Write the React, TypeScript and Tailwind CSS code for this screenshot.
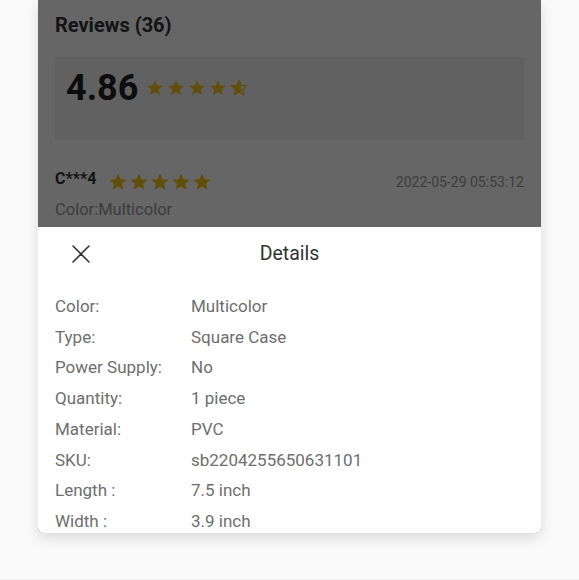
import React from 'react';

const GOLD = '#f2c414';

const Star: React.FC<{ size: number; fill?: number }> = ({ size, fill = 1 }) => {
  const id = React.useId();
  const pts = '12,1.8 15,8.6 22.3,9.2 16.8,14 18.4,21.2 12,17.4 5.6,21.2 7.2,14 1.7,9.2 9,8.6';
  return (
    <svg width={size} height={size} viewBox="0 0 24 24" className="shrink-0">
      <defs>
        <clipPath id={id}>
          <rect x="0" y="0" width={24 * fill} height="24" />
        </clipPath>
      </defs>
      {fill < 1 && <polygon points={pts} fill="none" stroke={GOLD} strokeWidth="1.6" strokeLinejoin="round" />}
      <polygon points={pts} fill={GOLD} clipPath={`url(#${id})`} />
    </svg>
  );
};

const details: [string, string][] = [
  ['Color:', 'Multicolor'],
  ['Type:', 'Square Case'],
  ['Power Supply:', 'No'],
  ['Quantity:', '1 piece'],
  ['Material:', 'PVC'],
  ['SKU:', 'sb2204255650631101'],
  ['Length :', '7.5 inch'],
  ['Width :', '3.9 inch']
];

export default function App() {
  return (
    <div
      className="h-[580px] bg-[#fafafa] border-b border-[#efefef] overflow-hidden"
      style={{ fontFamily: 'Roboto, "Liberation Sans", sans-serif' }}
    >
      <div className="relative ml-[38px] w-[503px] h-[533px] bg-white rounded-b-[6px] overflow-hidden shadow-[0_5px_14px_rgba(0,0,0,0.13)]">
        {/* reviews under the overlay */}
        <div className="px-[17px]">
          <h2 className="text-[20px] font-bold text-[#333] leading-[24px] pt-[13px]">Reviews (36)</h2>
          <div className="mt-[20px] h-[83px] bg-[#f2f2f2] pl-[11px] pt-[11px]">
            <div className="flex items-center gap-[8px]">
              <span className="text-[36px] font-bold text-[#222] leading-[40px]">4.86</span>
              <div className="flex items-center gap-[3px]">
                <Star size={18} />
                <Star size={18} />
                <Star size={18} />
                <Star size={18} />
                <Star size={18} fill={0.6} />
              </div>
            </div>
          </div>
          <div className="mt-[32px] flex items-center justify-between">
            <div className="flex items-center gap-[12px]">
              <span className="text-[16px] font-bold text-[#333] leading-[20px] -mt-[6px]">C***4</span>
              <div className="flex items-center gap-[1px]">
                <Star size={20} />
                <Star size={20} />
                <Star size={20} />
                <Star size={20} />
                <Star size={20} />
              </div>
            </div>
            <span className="text-[14px] text-[#999] leading-[20px]">2022-05-29 05:53:12</span>
          </div>
          <p className="mt-[7px] text-[16.5px] text-[#999] leading-[22px]">Color:Multicolor</p>
        </div>

        {/* modal overlay */}
        <div className="absolute inset-0 bg-black/60" />

        {/* details sheet */}
        <div className="absolute left-0 right-0 bottom-0 h-[306px] bg-white overflow-hidden">
          <div className="grid grid-cols-[1fr_auto_1fr] items-center h-[53px]">
            <div className="pl-[34px]">
              <svg width="18" height="18" viewBox="0 0 18 18">
                <path d="M1 1 17 17M17 1 1 17" stroke="#333" strokeWidth="1.6" strokeLinecap="round" />
              </svg>
            </div>
            <span className="text-[19.5px] text-[#333]">Details</span>
            <div />
          </div>
          <div className="pt-[11px] px-[17px]">
            {details.map(([label, value]) => (
              <div key={label} className="flex text-[17px] leading-[30.7px] text-[#6e6e6e]">
                <span className="w-[136px] shrink-0">{label}</span>
                <span>{value}</span>
              </div>
            ))}
          </div>
        </div>
      </div>
    </div>
  );
}
